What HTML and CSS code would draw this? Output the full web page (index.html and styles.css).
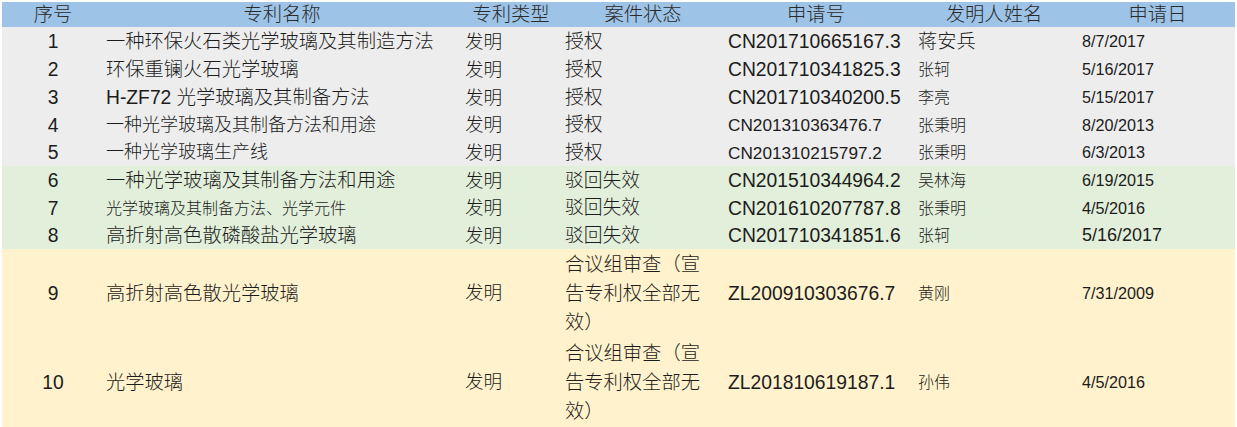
FILE: index.html
```html
<!DOCTYPE html>
<html lang="zh-CN">
<head>
<meta charset="utf-8">
<title>专利列表</title>
<link rel="stylesheet" href="styles.css">
</head>
<body>
<table class="patents">
  <colgroup>
    <col class="c-no"><col class="c-name"><col class="c-type"><col class="c-state"><col class="c-app"><col class="c-inv"><col class="c-date">
  </colgroup>
  <thead>
    <tr class="hd">
      <th>序号</th><th>专利名称</th><th>专利类型</th><th>案件状态</th><th>申请号</th><th>发明人姓名</th><th>申请日</th>
    </tr>
  </thead>
  <tbody>
    <tr class="gray h28">
      <td class="no">1</td><td class="name">一种环保火石类光学玻璃及其制造方法</td><td class="type">发明</td><td class="state">授权</td><td class="app">CN201710665167.3</td><td class="inv">蒋安兵</td><td class="date">8/7/2017</td>
    </tr>
    <tr class="gray h28">
      <td class="no">2</td><td class="name">环保重镧火石光学玻璃</td><td class="type">发明</td><td class="state">授权</td><td class="app">CN201710341825.3</td><td class="inv s16">张轲</td><td class="date">5/16/2017</td>
    </tr>
    <tr class="gray h28">
      <td class="no">3</td><td class="name"><span class="latin">H-ZF72</span> 光学玻璃及其制备方法</td><td class="type">发明</td><td class="state">授权</td><td class="app">CN201710340200.5</td><td class="inv s16">李亮</td><td class="date">5/15/2017</td>
    </tr>
    <tr class="gray h27">
      <td class="no">4</td><td class="name s18">一种光学玻璃及其制备方法和用途</td><td class="type">发明</td><td class="state">授权</td><td class="app s17">CN201310363476.7</td><td class="inv s16">张秉明</td><td class="date">8/20/2013</td>
    </tr>
    <tr class="gray h28">
      <td class="no">5</td><td class="name s18">一种光学玻璃生产线</td><td class="type">发明</td><td class="state">授权</td><td class="app s17">CN201310215797.2</td><td class="inv s16">张秉明</td><td class="date">6/3/2013</td>
    </tr>
    <tr class="green h28">
      <td class="no">6</td><td class="name">一种光学玻璃及其制备方法和用途</td><td class="type">发明</td><td class="state">驳回失效</td><td class="app">CN201510344964.2</td><td class="inv s16">吴林海</td><td class="date">6/19/2015</td>
    </tr>
    <tr class="green h27">
      <td class="no">7</td><td class="name s16">光学玻璃及其制备方法、光学元件</td><td class="type">发明</td><td class="state">驳回失效</td><td class="app">CN201610207787.8</td><td class="inv s16">张秉明</td><td class="date">4/5/2016</td>
    </tr>
    <tr class="green h28">
      <td class="no">8</td><td class="name">高折射高色散磷酸盐光学玻璃</td><td class="type">发明</td><td class="state">驳回失效</td><td class="app">CN201710341851.6</td><td class="inv s16">张轲</td><td class="date big">5/16/2017</td>
    </tr>
    <tr class="yellow h89">
      <td class="no">9</td><td class="name">高折射高色散光学玻璃</td><td class="type">发明</td><td class="state"><div class="wrap">合议组审查（宣告专利权全部无效）</div></td><td class="app">ZL200910303676.7</td><td class="inv s16">黄刚</td><td class="date">7/31/2009</td>
    </tr>
    <tr class="yellow h89">
      <td class="no">10</td><td class="name">光学玻璃</td><td class="type">发明</td><td class="state"><div class="wrap">合议组审查（宣告专利权全部无效）</div></td><td class="app">ZL201810619187.1</td><td class="inv s16">孙伟</td><td class="date">4/5/2016</td>
    </tr>
  </tbody>
</table>
</body>
</html>
```
FILE: styles.css
```css
html, body {
  margin: 0;
  padding: 0;
  background: #ffffff;
}

body {
  padding: 2px 0 0 2px;
  font-family: "Liberation Sans", "Noto Sans CJK SC", sans-serif;
  font-weight: 400;
  color: #1c1c1c;
}

.patents {
  border-collapse: collapse;
  table-layout: fixed;
  width: 1233px;
  font-size: 19.3px;
}

.c-no { width: 102px; }
.c-name { width: 356px; }
.c-type { width: 102px; }
.c-state { width: 162px; }
.c-app { width: 184px; }
.c-inv { width: 172px; }
.c-date { width: 155px; }

.patents th,
.patents td {
  padding: 0;
  white-space: nowrap;
  vertical-align: middle;
  line-height: 1.2;
}

.hd th {
  background: #9dc3e6;
  height: 25px;
  font-weight: 300;
  text-align: center;
  color: #2a2a2a;
}

.gray td { background: #ededed; }
.green td { background: #e2efda; }
.yellow td { background: #fff2cc; }

.h28 td { height: 26px; padding-top: 2px; }
.h27 td { height: 25px; padding-top: 2px; }
.h89 td { height: 89px; }

.no {
  text-align: center;
}

/* Chinese text cells use the light CJK weight */
.name, .type, .state, .inv { font-weight: 300; }
.latin { font-weight: 400; }

.name { padding-left: 2px !important; }
.type { padding-left: 5px !important; font-size: 18.6px; }
.state { padding-left: 3px !important; font-size: 18.8px; }
.app { padding-left: 4px !important; }
.inv { padding-left: 10px !important; }
.date { padding-left: 2px !important; font-size: 16.2px; }
.date.big { font-size: 18px; }

.s18 { font-size: 18px; }
.s17 { font-size: 17.2px; }
.s16 { font-size: 16px; }

.wrap {
  width: 140px;
  white-space: normal;
  line-height: 29px;
  font-size: 19.3px;
}
```
